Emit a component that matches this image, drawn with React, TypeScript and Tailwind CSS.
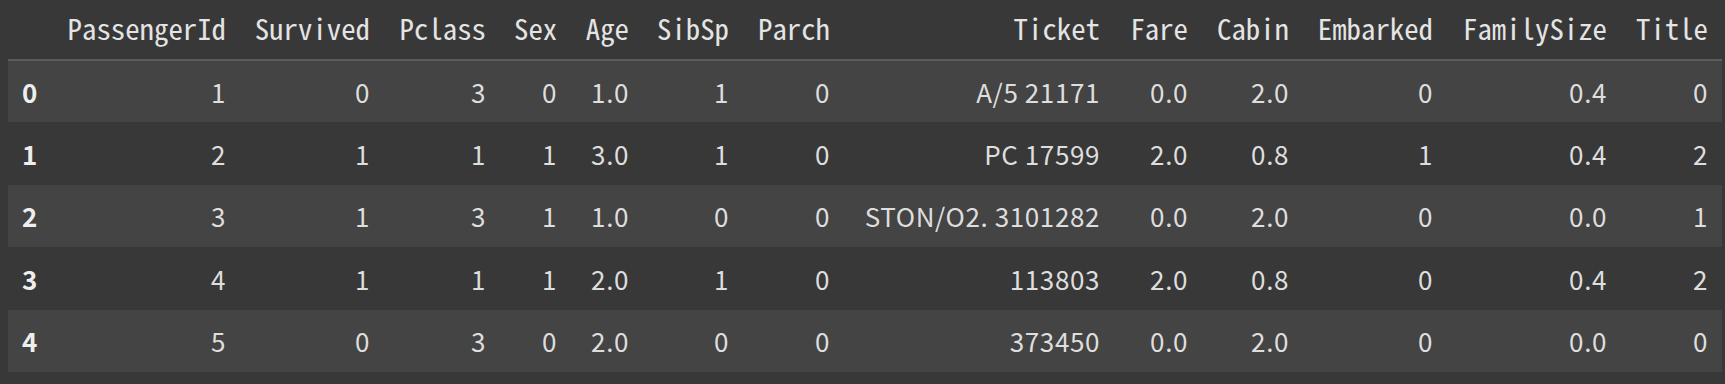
const headers = [
  "",
  "PassengerId",
  "Survived",
  "Pclass",
  "Sex",
  "Age",
  "SibSp",
  "Parch",
  "Ticket",
  "Fare",
  "Cabin",
  "Embarked",
  "FamilySize",
  "Title",
];

const colWidths = [
  "w-[43px]",
  "w-[189px]",
  "w-[144px]",
  "w-[116px]",
  "w-[71px]",
  "w-[72px]",
  "w-[100px]",
  "w-[101px]",
  "w-[270px]",
  "w-[88px]",
  "w-[101px]",
  "w-[144px]",
  "w-[174px]",
  "w-[101px]",
];

const rows = [
  ["1", "0", "3", "0", "1.0", "1", "0", "A/5 21171", "0.0", "2.0", "0", "0.4", "0"],
  ["2", "1", "1", "1", "3.0", "1", "0", "PC 17599", "2.0", "0.8", "1", "0.4", "2"],
  ["3", "1", "3", "1", "1.0", "0", "0", "STON/O2. 3101282", "0.0", "2.0", "0", "0.0", "1"],
  ["4", "1", "1", "1", "2.0", "1", "0", "113803", "2.0", "0.8", "0", "0.4", "2"],
  ["5", "0", "3", "0", "2.0", "0", "0", "373450", "0.0", "2.0", "0", "0.0", "0"],
];

const rowHeights = ["h-[62px]", "h-[63px]", "h-[62px]", "h-[63px]", "h-[62px]"];

export default function App() {
  return (
    <div className="w-full h-[384px] bg-[#383838] overflow-hidden">
      <table className="ml-[8px] w-[1714px] table-fixed border-collapse text-[#dedede] font-['Noto_Sans_CJK_KR',sans-serif] text-[26px]">
        <colgroup>
          {colWidths.map((w, i) => (
            <col key={i} className={w} />
          ))}
        </colgroup>
        <thead>
          <tr className="h-[60px] border-b-2 border-[#5c5c5c]">
            {headers.map((h, i) => (
              <th
                key={i}
                className="px-[14px] pb-[3px] text-right align-middle font-normal whitespace-nowrap text-[#e4e4e4] font-['Noto_Sans_Mono_CJK_KR','DejaVu_Sans_Mono',monospace] text-[28.8px] leading-none"
              >
                {h}
              </th>
            ))}
          </tr>
        </thead>
        <tbody>
          {rows.map((r, i) => (
            <tr key={i} className={`${rowHeights[i]} ${i % 2 === 0 ? "bg-[#444444]" : "bg-[#383838]"}`}>
              <th className="px-[14px] text-left align-middle font-bold text-[#eeeeee] leading-none">{i}</th>
              {r.map((v, j) => (
                <td key={j} className="px-[14px] text-right align-middle whitespace-nowrap leading-none tracking-[0.6px]">
                  {v}
                </td>
              ))}
            </tr>
          ))}
        </tbody>
      </table>
    </div>
  );
}
